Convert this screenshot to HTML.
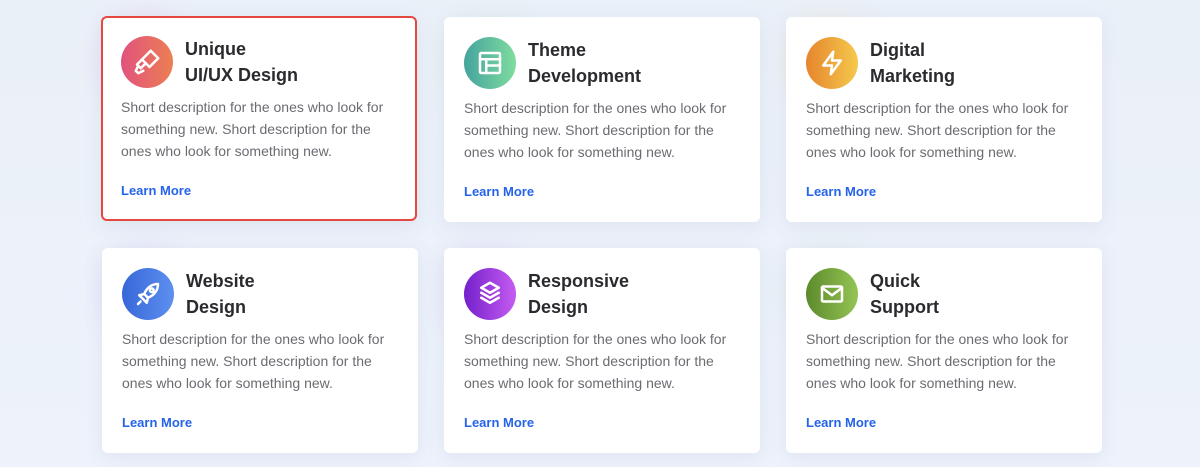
<!DOCTYPE html>
<html><head><meta charset="utf-8"><style>
*{box-sizing:border-box;margin:0;padding:0}
body{width:1200px;height:467px;overflow:hidden;background:linear-gradient(180deg,#eaf0f8,#edf2fb);font-family:"Liberation Sans",sans-serif;position:relative}
.card{position:absolute;width:316px;height:205px;background:#fff;border-radius:6px;box-shadow:0 4px 18px rgba(120,140,180,.12);padding:0 20px}
.card.sel{border:2px solid #e5483e;padding:0 18px}
.ic{position:absolute;left:20px;top:20px;width:52px;height:52px;border-radius:50%;display:flex;align-items:center;justify-content:center}
.ic::before{content:"";position:absolute;left:-20px;top:-20px;width:92px;height:92px;border-radius:50%;background:var(--g);opacity:.12;filter:blur(14px);z-index:-1}
.sel .ic{left:18px;top:18px}
h3{position:absolute;left:84px;top:20px;font-size:18px;line-height:26px;font-weight:bold;color:#2b2b2f}
.sel h3{left:82px;top:18px}
p{position:absolute;left:20px;top:80px;width:266px;font-size:14px;line-height:22px;color:#6b6b72}
.sel p{left:18px;top:78px}
a{position:absolute;left:20px;top:167px;font-size:13px;font-weight:bold;color:#2563eb;text-decoration:none}
.sel a{left:18px;top:165px}
svg{width:30px;height:30px;fill:none;stroke:#fff;stroke-width:2;stroke-linecap:round;stroke-linejoin:round}
</style></head><body>
<div class="card sel" style="left:101px;top:16px">
<div class="ic" style="background:linear-gradient(90deg,#e1527e,#ec7f52);--g:#e04ad0"><svg viewBox="0 0 24 24"><path d="M15 3l6 6-7 7-6-6z"/><path d="M8 10l-4 4 3 3 4-4"/><path d="M5 15l-2 4 2 2 4-2"/></svg></div>
<h3>Unique<br>UI/UX Design</h3>
<p>Short description for the ones who look for something new. Short description for the ones who look for something new.</p>
<a>Learn More</a></div>
<div class="card" style="left:444px;top:17px">
<div class="ic" style="background:linear-gradient(90deg,#45a39e,#7fdc9e);--g:#8ad88a"><svg viewBox="0 0 24 24"><rect x="4" y="4" width="16" height="16" rx="1"/><path d="M4 9h16M9 9v11M9 14h11"/></svg></div>
<h3>Theme<br>Development</h3>
<p>Short description for the ones who look for something new. Short description for the ones who look for something new.</p>
<a>Learn More</a></div>
<div class="card" style="left:786px;top:17px">
<div class="ic" style="background:linear-gradient(90deg,#e5852d,#f5c94c);--g:#f5d060"><svg viewBox="0 0 24 24"><path d="M13 3L5 14h7l-1 7 8-11h-7z"/></svg></div>
<h3>Digital<br>Marketing</h3>
<p>Short description for the ones who look for something new. Short description for the ones who look for something new.</p>
<a>Learn More</a></div>
<div class="card" style="left:102px;top:248px">
<div class="ic" style="background:linear-gradient(90deg,#3767d8,#5e8ff0);--g:#b070f0"><svg viewBox="0 0 24 24"><path d="M20 4c-5 0-9 3-11 8l3 3c5-2 8-6 8-11z"/><circle cx="15" cy="9" r="1.5"/><path d="M9 12l-4 1 3 3M12 15l-1 4-3-3M6 18l-2 2"/></svg></div>
<h3>Website<br>Design</h3>
<p>Short description for the ones who look for something new. Short description for the ones who look for something new.</p>
<a>Learn More</a></div>
<div class="card" style="left:444px;top:248px">
<div class="ic" style="background:linear-gradient(90deg,#7420cc,#c55cf0);--g:#b060f0"><svg viewBox="0 0 24 24"><path d="M12 3l7 4-7 4-7-4z"/><path d="M5 11l7 4 7-4M5 15l7 4 7-4"/></svg></div>
<h3>Responsive<br>Design</h3>
<p>Short description for the ones who look for something new. Short description for the ones who look for something new.</p>
<a>Learn More</a></div>
<div class="card" style="left:786px;top:248px">
<div class="ic" style="background:linear-gradient(90deg,#5d8a2c,#94c454);--g:#a0d080"><svg viewBox="0 0 24 24"><rect x="4" y="6" width="16" height="12" rx="1"/><path d="M4 7l8 6 8-6"/></svg></div>
<h3>Quick<br>Support</h3>
<p>Short description for the ones who look for something new. Short description for the ones who look for something new.</p>
<a>Learn More</a></div>
</body></html>
